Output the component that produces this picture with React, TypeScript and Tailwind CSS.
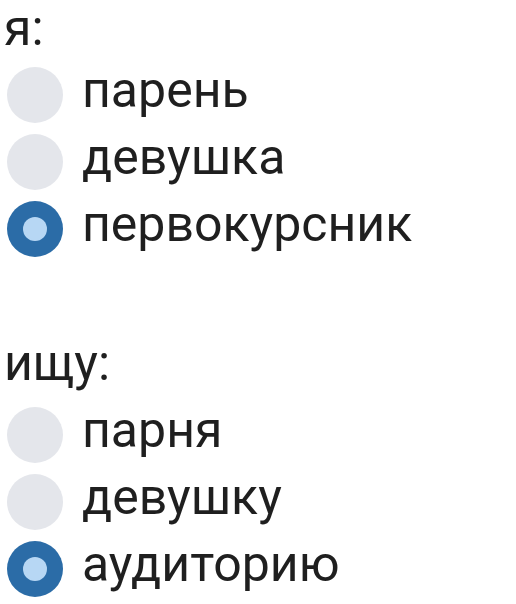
interface OptionProps {
  label: string
  selected?: boolean
}

function Option({ label, selected }: OptionProps): React.JSX.Element {
  return (
    <div className="flex items-center h-[67px] leading-[67px]">
      {selected ? (
        <span className="ml-[7px] mt-[8px] w-[56px] h-[56px] rounded-full bg-[#2b6ca7] flex items-center justify-center shrink-0">
          <span className="w-[24px] h-[24px] rounded-full bg-[#b7d7f4]" />
        </span>
      ) : (
        <span className="ml-[7px] mt-[8px] w-[56px] h-[56px] rounded-full bg-[#e4e6eb] shrink-0" />
      )}
      <span className="ml-[19px]">{label}</span>
    </div>
  )
}

function App(): React.JSX.Element {
  return (
    <div
      className="w-[516px] h-[604px] bg-white text-[#1f1f1f] text-[50px] overflow-hidden"
      style={{ fontFamily: "Roboto, 'Noto Sans', sans-serif" }}
    >
      <div className="pl-[4px] leading-[57px]">я:</div>
      <Option label="парень" />
      <Option label="девушка" />
      <Option label="первокурсник" selected />
      <div className="pl-[4px] mt-[72px] leading-[67px]">ищу:</div>
      <Option label="парня" />
      <Option label="девушку" />
      <Option label="аудиторию" selected />
    </div>
  )
}

export default App
